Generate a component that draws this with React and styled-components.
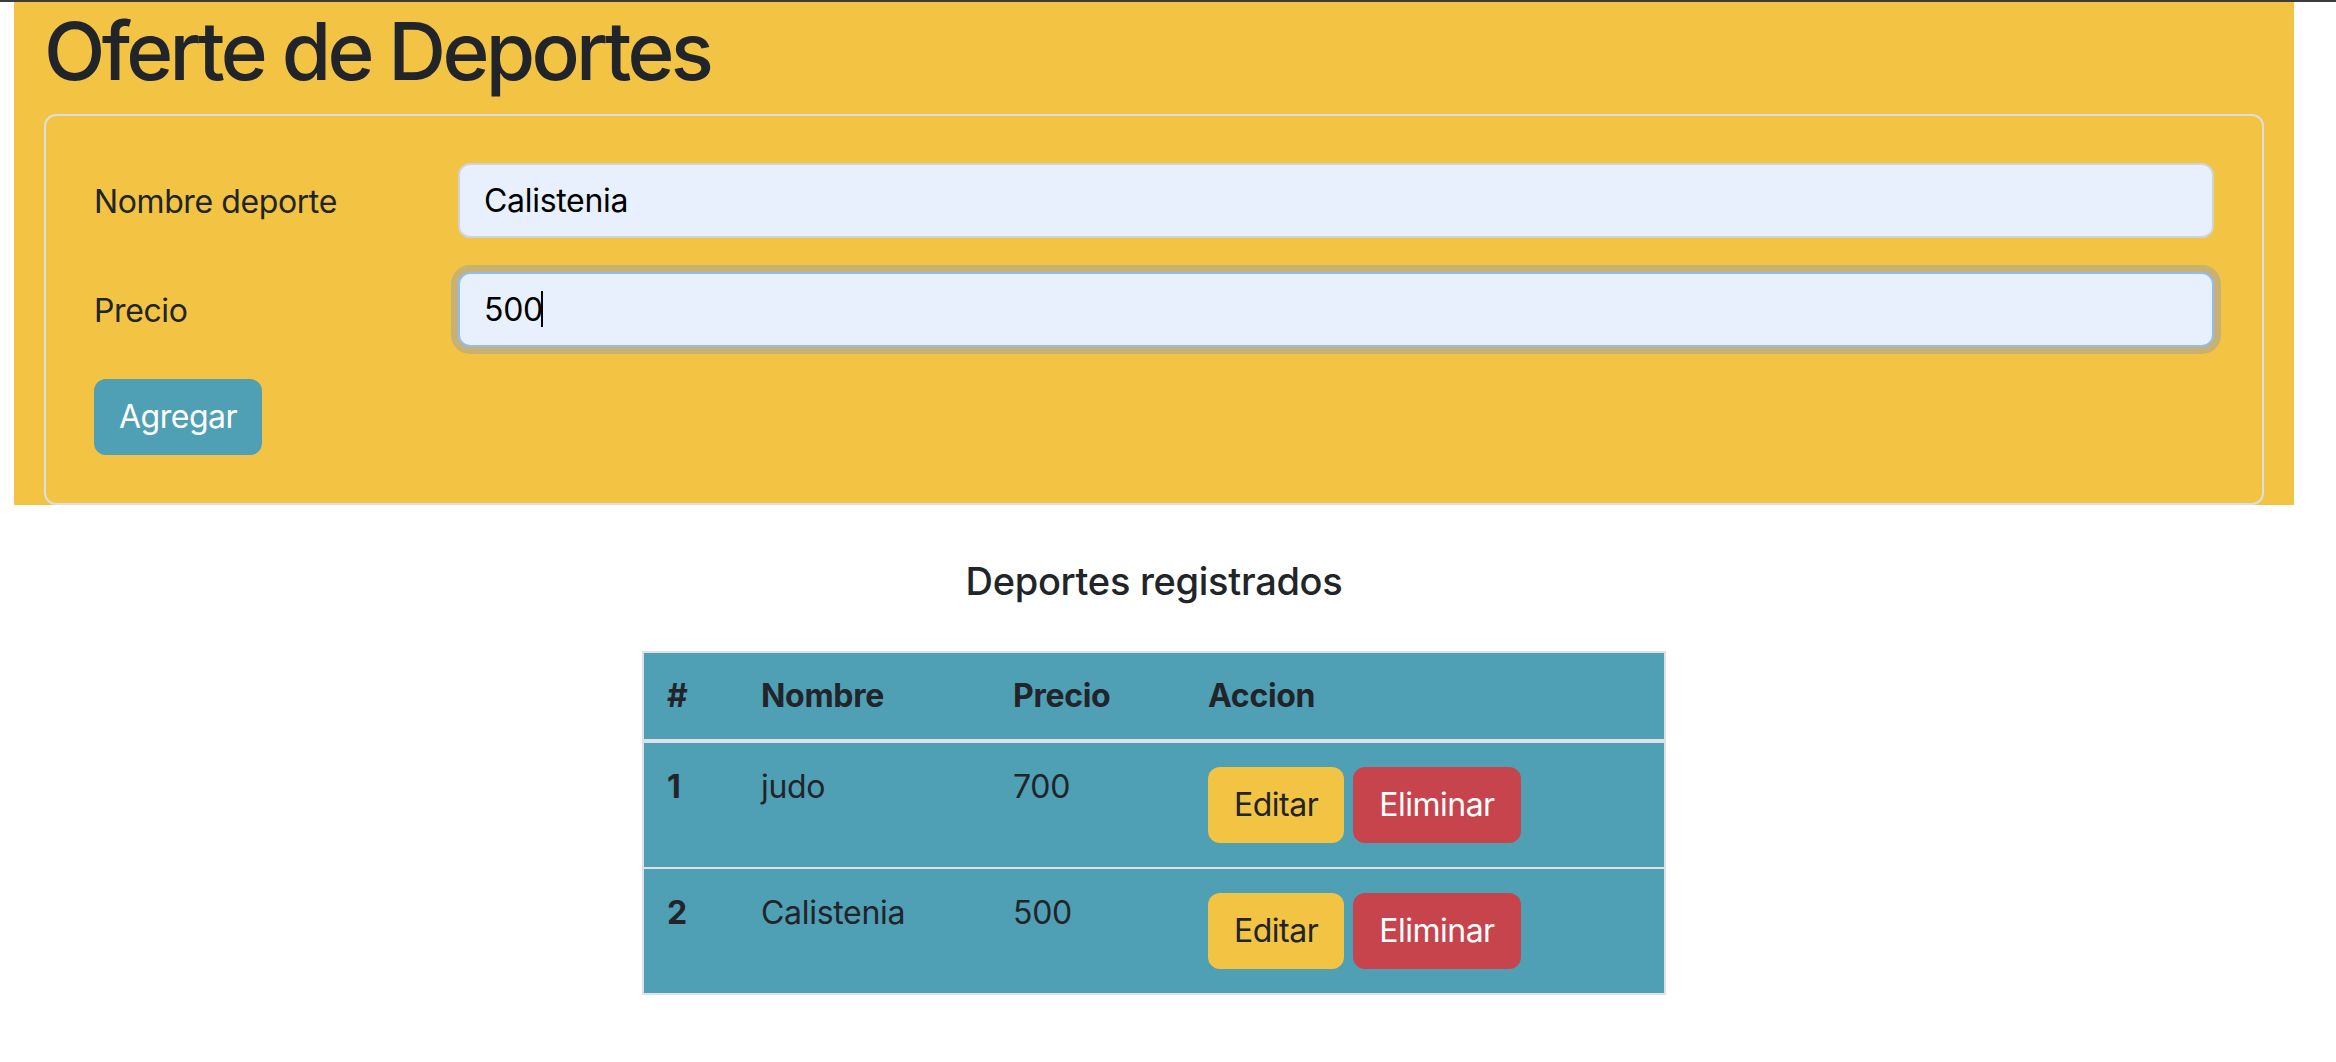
import React from "react";
import styled, { createGlobalStyle } from "styled-components";

const GlobalStyle = createGlobalStyle`
  html, body {
    margin: 0;
    padding: 0;
    background: #ffffff;
  }
  body {
    font-family: Inter, "Noto Sans", "Liberation Sans", sans-serif;
    font-size: 32px;
    line-height: 48px;
    color: #212529;
  }
  * { box-sizing: border-box; }
`;

const YELLOW = "#f3c343";
const TEAL = "#4f9fb5";
const RED = "#c8444d";
const LINE = "#dee2e6";
const INK = "#212529";

const TopRule = styled.div`
  height: 2px;
  background: #3c3c3c;
`;

const Page = styled.div`
  width: 2280px;
  margin-left: 14px;
`;

const Hero = styled.section`
  background: ${YELLOW};
  padding: 1px 30px 0;
`;

const Title = styled.h1`
  margin: 0 0 15px;
  font-size: 80px;
  line-height: 96px;
  font-weight: 500;
  letter-spacing: -3.7px;
  color: ${INK};
`;

const Card = styled.div`
  border: 2px solid #dcdfe2;
  border-radius: 12px;
  padding: 47px 48px 48px 48px;
`;

const FormRow = styled.div`
  display: grid;
  grid-template-columns: 364px 1fr;
  align-items: center;
  margin-bottom: ${(p) => p.$gap}px;
`;

const Label = styled.label`
  font-size: 32px;
  line-height: 48px;
  color: ${INK};
  letter-spacing: -0.4px;
  padding-top: 3px;
`;

const FieldWrap = styled.div`
  position: relative;
`;

const Input = styled.input`
  display: block;
  width: 100%;
  height: ${(p) => p.$h}px;
  padding: 0 24px;
  font-family: inherit;
  font-size: 32px;
  letter-spacing: -0.3px;
  color: #000;
  background: #e8f0fe;
  border: 2px solid ${(p) => (p.$focused ? "#8fbcf7" : "#cfd4da")};
  border-radius: 12px;
  outline: none;
  box-shadow: ${(p) => (p.$focused ? "0 0 0 7px #c7b273" : "none")};
`;

const Caret = styled.span`
  position: absolute;
  left: 83px;
  top: 19px;
  width: 2px;
  height: 36px;
  background: #000;
`;

const Button = styled.button`
  display: inline-flex;
  align-items: center;
  justify-content: center;
  height: 76px;
  padding: 0 ${(p) => p.$px || 24}px;
  font-family: inherit;
  font-size: 32px;
  line-height: 48px;
  letter-spacing: -0.5px;
  border: 2px solid transparent;
  border-radius: 12px;
  background: ${(p) => p.$bg};
  color: ${(p) => p.$fg};
  cursor: pointer;
`;

const Registered = styled.section`
  display: flex;
  flex-direction: column;
  align-items: center;
`;

const Heading = styled.h5`
  margin: 53px 0 47px;
  font-size: 38px;
  line-height: 46px;
  font-weight: 500;
  letter-spacing: -0.3px;
  color: ${INK};
`;

const Table = styled.table`
  width: 1024px;
  table-layout: fixed;
  border-collapse: separate;
  border-spacing: 0;
  border: 2px solid ${LINE};
  background: ${TEAL};
  color: ${INK};
  margin-bottom: 60px;
`;

const HeadCell = styled.th`
  text-align: left;
  font-weight: 700;
  padding: 19px 20px 19px 23px;
  line-height: 48px;
  vertical-align: top;
  border-bottom: 4px solid ${LINE};
  letter-spacing: -0.3px;
`;

const Row = styled.tr`
  &:not(:last-child) > * {
    border-bottom: 2px solid ${LINE};
  }
`;

const RowHead = styled.th`
  text-align: left;
  font-weight: 700;
  padding: 20px 20px 18px 23px;
  line-height: 48px;
  vertical-align: top;
`;

const Cell = styled.td`
  padding: 20px 20px 18px 23px;
  line-height: 48px;
  vertical-align: top;
  letter-spacing: -0.3px;
`;

const Actions = styled.div`
  display: flex;
  gap: 9px;
  margin: 4px 0 6px;
`;

const sports = [
  { id: 1, name: "judo", price: 700 },
  { id: 2, name: "Calistenia", price: 500 },
];

export default function App() {
  return (
    <>
      <GlobalStyle />
      <TopRule />
      <Page>
        <Hero>
          <Title>Oferte de Deportes</Title>
          <Card>
            <FormRow $gap={34}>
              <Label htmlFor="nombre">Nombre deporte</Label>
              <FieldWrap>
                <Input id="nombre" $h={75} readOnly value="Calistenia" />
              </FieldWrap>
            </FormRow>
            <FormRow $gap={32}>
              <Label htmlFor="precio">Precio</Label>
              <FieldWrap>
                <Input id="precio" $h={75} $focused readOnly value="500" />
                <Caret />
              </FieldWrap>
            </FormRow>
            <Button $bg={TEAL} $fg="#ffffff" $px={23}>Agregar</Button>
          </Card>
        </Hero>
        <Registered>
          <Heading>Deportes registrados</Heading>
          <Table>
            <colgroup>
              <col style={{ width: 94 }} />
              <col style={{ width: 252 }} />
              <col style={{ width: 195 }} />
              <col />
            </colgroup>
            <thead>
              <tr>
                <HeadCell>#</HeadCell>
                <HeadCell>Nombre</HeadCell>
                <HeadCell>Precio</HeadCell>
                <HeadCell>Accion</HeadCell>
              </tr>
            </thead>
            <tbody>
              {sports.map((s) => (
                <Row key={s.id}>
                  <RowHead>{s.id}</RowHead>
                  <Cell>{s.name}</Cell>
                  <Cell>{s.price}</Cell>
                  <Cell>
                    <Actions>
                      <Button $bg={YELLOW} $fg={INK}>Editar</Button>
                      <Button $bg={RED} $fg="#ffffff">Eliminar</Button>
                    </Actions>
                  </Cell>
                </Row>
              ))}
            </tbody>
          </Table>
        </Registered>
      </Page>
    </>
  );
}
